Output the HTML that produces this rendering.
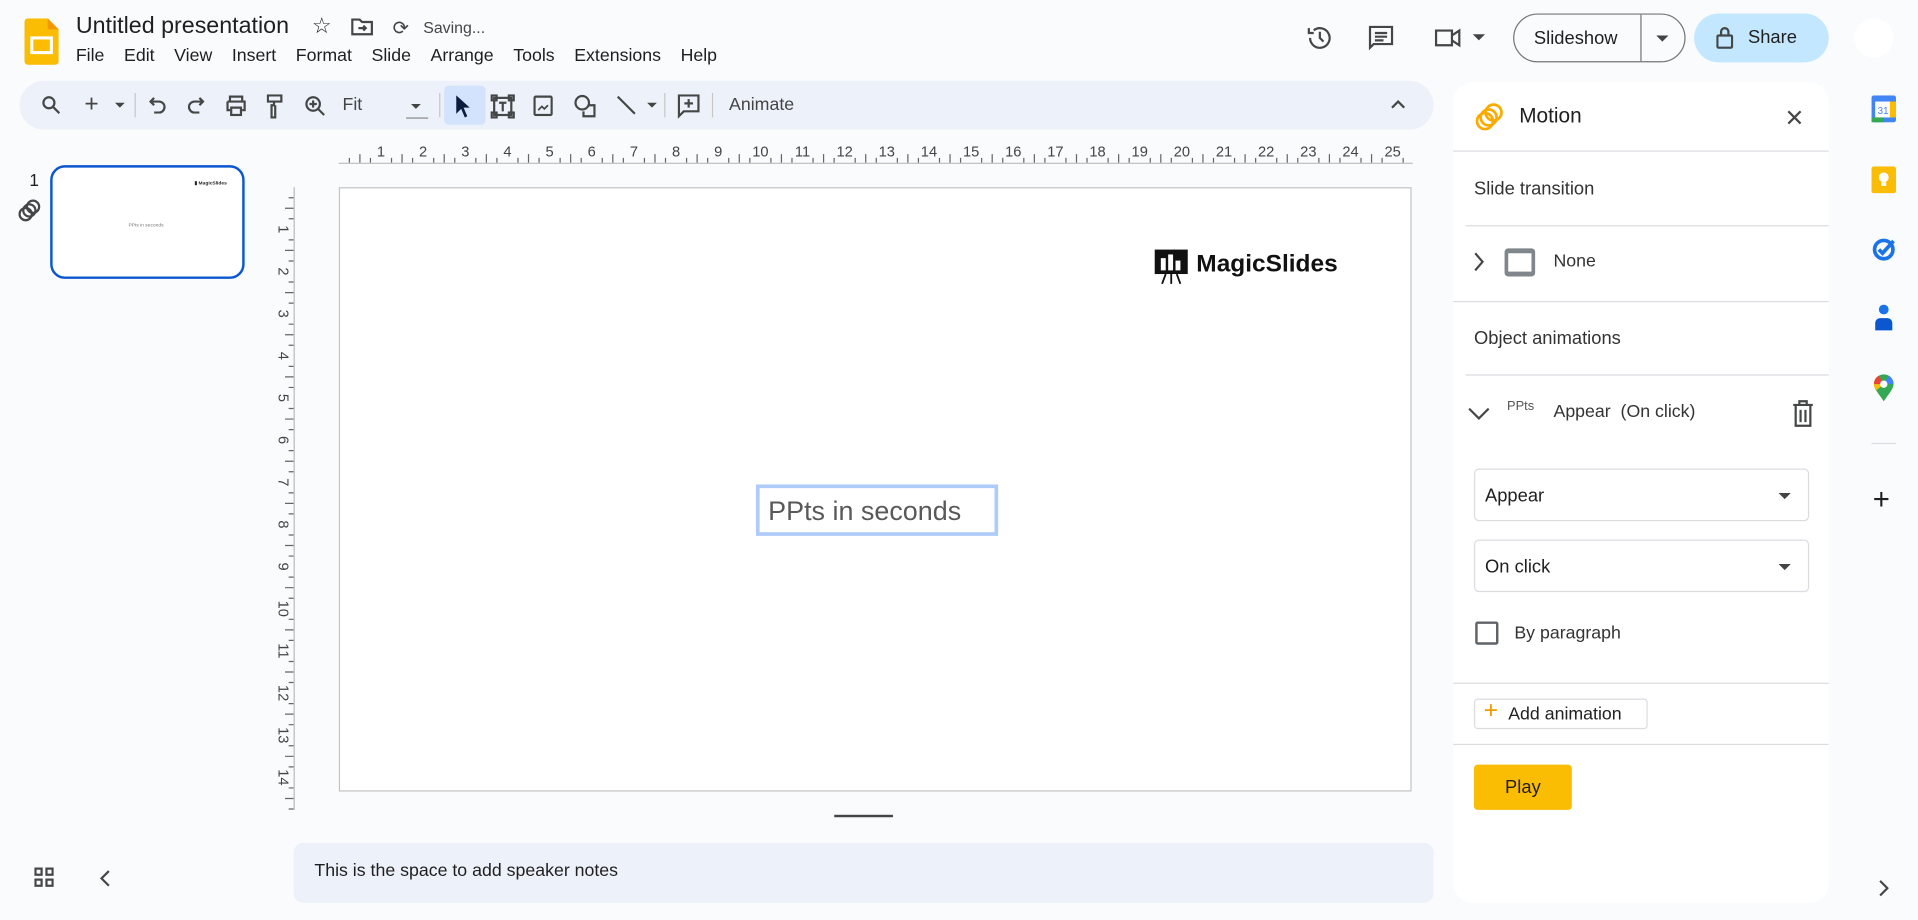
<!DOCTYPE html>
<html><head><meta charset="utf-8"><style>
*{margin:0;padding:0;box-sizing:border-box}
html,body{width:1918px;height:920px;overflow:hidden;background:#f9fbfd}
#w{position:absolute;left:0;top:0;width:1568px;height:752px;transform:scale(1.22322,1.2234);transform-origin:0 0;font-family:"Liberation Sans",Arial,sans-serif;color:#1f1f1f;background:#f9fbfd}
.a{position:absolute}
.menu span{margin-right:16px}
.ic{position:absolute;fill:none;stroke:#444746;stroke-width:1.8}
.tb{position:absolute;left:16px;top:66px;width:1156px;height:40px;background:#edf2fa;border-radius:20px}
.sep{position:absolute;top:10px;width:1px;height:20px;background:#c7c7c7}
.panel{position:absolute;left:1188px;top:67px;width:307px;height:671px;background:#fff;border-radius:16px}
.hl{position:absolute;height:1px;background:#dadce0}
.sel{position:absolute;left:17px;width:274px;height:43px;border:1px solid #dadce0;border-radius:4px;font-size:15px;padding:13px 8px}
.sel:after{content:"";position:absolute;right:14px;top:19px;border:5px solid transparent;border-top-color:#444;border-bottom:0}
</style></head><body><div id="w">
<svg class="a" style="left:20px;top:15px" width="28" height="38" viewBox="0 0 28 38"><path d="M3 0h16l9 9v26a3 3 0 0 1-3 3H3a3 3 0 0 1-3-3V3a3 3 0 0 1 3-3z" fill="#fbbc04"/><path d="M19 0l9 9h-9z" fill="#f29900"/><rect x="6" y="16" width="16" height="12" fill="none" stroke="#fff" stroke-width="2.5"/></svg>
<div class="a" style="left:62px;top:11px;font-size:19px;color:#1f1f1f">Untitled presentation</div>
<div class="a" style="left:255px;top:11px;font-size:18px">☆</div>
<svg class="ic" style="left:287px;top:14px" width="18" height="16" viewBox="0 0 18 16"><path d="M1 2h6l2 2h8v10H1z M6 9h6 M10 7l2 2-2 2"/></svg>
<div class="a" style="left:321px;top:13px;font-size:16px;color:#444">⟳</div>
<div class="a" style="left:346px;top:15px;font-size:13px;color:#444746">Saving...</div>
<div class="a menu" style="left:62px;top:38px;font-size:14.5px;color:#1f1f1f"><span>File</span><span>Edit</span><span>View</span><span>Insert</span><span>Format</span><span>Slide</span><span>Arrange</span><span>Tools</span><span>Extensions</span><span>Help</span></div>
<svg class="ic" style="left:1067px;top:19px" width="24" height="24" viewBox="0 0 24 24" stroke-width="2"><path d="M4 12a8 8 0 1 0 3-6.2M3 4v4h4M12 7v5l3 3"/></svg>
<svg class="ic" style="left:1117px;top:19px" width="24" height="24" viewBox="0 0 24 24" stroke-width="2"><path d="M3 3h18v14H6l-3 3z M7 8h10M7 11h10M7 14h7"/></svg>
<svg class="ic" style="left:1172px;top:21px" width="24" height="20" viewBox="0 0 24 20" stroke-width="2"><path d="M2 4h13v12H2z M15 8l6-4v12l-6-4"/></svg>
<div class="a" style="left:1204px;top:28px;border:5px solid transparent;border-top-color:#444;border-bottom:0"></div>
<div class="a" style="left:1237px;top:11px;width:141px;height:40px;border:1px solid #747775;border-radius:20px;font-size:15px;color:#1f1f1f"><span class="a" style="left:16px;top:11px">Slideshow</span><span class="a" style="left:103px;top:0;width:1px;height:38px;background:#747775"></span><span class="a" style="left:116px;top:17px;border:5px solid transparent;border-top-color:#444;border-bottom:0"></span></div>
<div class="a" style="left:1385px;top:11px;width:110px;height:40px;background:#c2e7ff;border-radius:20px;font-size:15px"><svg class="ic" style="left:18px;top:11px" width="14" height="18" viewBox="0 0 14 18" stroke="#1f1f1f" stroke-width="1.8"><rect x="1" y="7" width="12" height="10" rx="1"/><path d="M4 7V4a3 3 0 0 1 6 0v3"/></svg><span class="a" style="left:44px;top:11px">Share</span></div>
<div class="a" style="left:1516px;top:15px;width:32px;height:32px;border-radius:50%;background:#fff"></div>
<div class="tb">
<svg class="ic" style="left:18px;top:12px" width="16" height="16" viewBox="0 0 16 16" stroke-width="2"><circle cx="6" cy="6" r="4.5"/><path d="M9.5 9.5l5 5"/></svg>
<div class="a" style="left:53px;top:8px;font-size:20px;color:#444">+</div>
<div class="a" style="left:78px;top:18px;border:4px solid transparent;border-top-color:#444;border-bottom:0"></div>
<div class="sep" style="left:94px"></div>
<svg class="ic" style="left:106px;top:13px" width="14" height="14" viewBox="0 0 14 14" stroke-width="1.8"><path d="M4 1L1 4l3 3M1 4h7a4.5 4.5 0 0 1 0 9H4"/></svg>
<svg class="ic" style="left:137px;top:13px" width="14" height="14" viewBox="0 0 14 14" stroke-width="1.8"><path d="M10 1l3 3-3 3M13 4H6a4.5 4.5 0 0 0 0 9h4"/></svg>
<svg class="ic" style="left:168px;top:12px" width="18" height="17" viewBox="0 0 18 17" stroke-width="1.8"><path d="M4 5V1h10v4M2 5h14v7h-2M4 12H2V5M5 10h8v6H5z"/></svg>
<svg class="ic" style="left:202px;top:11px" width="14" height="20" viewBox="0 0 14 20" stroke="#b0b0b0"><path d="M1 1h11v5H1z M6 6v3h-2v10h3V9"/></svg>
<svg class="ic" style="left:233px;top:12px" width="17" height="17" viewBox="0 0 17 17" stroke-width="1.8"><circle cx="7" cy="7" r="5.5"/><path d="M11 11l5 5M7 4v6M4 7h6"/></svg>
<div class="a" style="left:264px;top:12px;font-size:14.5px;color:#444">Fit</div>
<div class="a" style="left:320px;top:19px;border:4px solid transparent;border-top-color:#444;border-bottom:0"></div>
<div class="a" style="left:316px;top:30px;width:18px;height:1px;background:#888"></div>
<div class="sep" style="left:343px"></div>
<div class="a" style="left:347px;top:4px;width:34px;height:32px;background:#d3e3fd;border-radius:4px"></div>
<svg class="a" style="left:356px;top:11px" width="14" height="20" viewBox="0 0 14 20"><path d="M1 1l11 10H7l3 7-2 1-3-7-4 4z" fill="#0b1c3d"/></svg>
<svg class="ic" style="left:385px;top:11px" width="20" height="20" viewBox="0 0 20 20" stroke-width="1.6"><rect x="3" y="3" width="14" height="14"/><rect x="1" y="1" width="4" height="4"/><rect x="15" y="1" width="4" height="4"/><rect x="1" y="15" width="4" height="4"/><rect x="15" y="15" width="4" height="4"/><path d="M7 7h6M10 7v7"/></svg>
<svg class="ic" style="left:420px;top:12px" width="16" height="17" viewBox="0 0 16 17" stroke-width="1.8"><rect x="1" y="1" width="14" height="15" rx="1"/><path d="M4 12l3-3 2 2 3-3" stroke-width="1.4"/></svg>
<svg class="ic" style="left:453px;top:11px" width="18" height="19" viewBox="0 0 18 19" stroke-width="1.8"><circle cx="7" cy="7" r="5.5"/><path d="M12 9h5v9H8v-4"/></svg>
<svg class="ic" style="left:487px;top:11px" width="18" height="18" viewBox="0 0 18 18" stroke-width="2.2"><path d="M2 2l14 14"/></svg>
<div class="a" style="left:513px;top:18px;border:4px solid transparent;border-top-color:#444;border-bottom:0"></div>
<div class="sep" style="left:527px"></div>
<svg class="ic" style="left:538px;top:11px" width="18" height="20" viewBox="0 0 18 20" stroke-width="1.8"><path d="M1 1h16v13H5l-4 4z M9 4v7M5.5 7.5h7"/></svg>
<div class="sep" style="left:566px"></div>
<div class="a" style="left:580px;top:12px;font-size:14.5px;color:#444">Animate</div>
<svg class="ic" style="left:1121px;top:15px" width="12" height="8" viewBox="0 0 12 8" stroke-width="1.8"><path d="M1 7l5-5 5 5"/></svg>
</div>
<div class="a" style="left:24px;top:139px;font-size:14px">1</div>
<svg class="ic" style="left:14px;top:162px" width="20" height="20" viewBox="0 0 20 20" stroke-width="1.6"><circle cx="7" cy="13" r="5"/><circle cx="10" cy="10" r="5"/><circle cx="13" cy="7" r="5"/></svg>
<div class="a" style="left:41px;top:135px;width:159px;height:93px;border:2.5px solid #0b57d0;border-radius:12px;background:#fff">
<div class="a" style="left:116px;top:10px;font-size:4px;font-weight:bold">▮ MagicSlides</div>
<div class="a" style="left:62px;top:44px;font-size:4px;color:#777">PPts in seconds</div></div>
<svg class="ic" style="left:28px;top:709px" width="16" height="16" viewBox="0 0 16 16" stroke-width="1.5"><rect x="1" y="1" width="5" height="5"/><rect x="10" y="1" width="5" height="5"/><rect x="1" y="10" width="5" height="5"/><rect x="10" y="10" width="5" height="5"/></svg>
<svg class="ic" style="left:81px;top:711px" width="10" height="14" viewBox="0 0 10 14" stroke-width="1.6"><path d="M8 1L2 7l6 6"/></svg>
<svg id="rh" class="a" style="left:240px;top:110px" width="920" height="26"></svg>
<svg id="rv" class="a" style="left:222px;top:134px" width="20" height="530"></svg>
<div class="a" style="left:277px;top:153px;width:877px;height:494px;background:#fff;border:1px solid #c4c4c4">
<svg class="a" style="left:665px;top:49px" width="29" height="30" viewBox="0 0 29 30"><rect x="1" y="1" width="27" height="20" fill="#111"/><rect x="6" y="8" width="4" height="10" fill="#fff"/><rect x="12" y="5" width="4" height="13" fill="#fff"/><rect x="18" y="10" width="4" height="8" fill="#fff"/><path d="M10 21l-3 8M19 21l3 8M14.5 21v8" stroke="#111" stroke-width="1.5"/></svg>
<div class="a" style="left:700px;top:51px;font-size:20px;font-weight:bold;color:#111">MagicSlides</div>
<div class="a" style="left:340px;top:242px;width:198px;height:42px;border:3px solid #aecbfa;font-size:22px;color:#595959;padding:6px 7px">PPts in seconds</div>
</div>
<div class="a" style="left:682px;top:666px;width:48px;height:2px;background:#444"></div>
<div class="a" style="left:240px;top:689px;width:932px;height:49px;background:#edf2fa;border-radius:8px;font-size:14.5px;padding:15px 17px">This is the space to add speaker notes</div>
<div class="panel">
<svg class="a" style="left:17px;top:15px" width="26" height="26" viewBox="0 0 26 26" fill="none" stroke="#f9ab00" stroke-width="2.2"><circle cx="9" cy="17" r="6.5"/><circle cx="12" cy="14" r="6.5"/><circle cx="16" cy="10" r="6.5"/></svg>
<div class="a" style="left:54px;top:18px;font-size:17px">Motion</div>
<svg class="ic" style="left:273px;top:23px" width="12" height="12" viewBox="0 0 12 12" stroke="#1f1f1f" stroke-width="1.8"><path d="M1 1l10 10M11 1L1 11"/></svg>
<div class="hl" style="left:0;top:56px;width:307px"></div>
<div class="a" style="left:17px;top:79px;font-size:15px;color:#333">Slide transition</div>
<div class="hl" style="left:10px;top:117px;width:297px"></div>
<svg class="ic" style="left:16px;top:139px" width="10" height="16" viewBox="0 0 10 16" stroke-width="2"><path d="M2 1l6 7-6 7"/></svg>
<div class="a" style="left:42px;top:136px;width:25px;height:23px;background:#80868b;border-radius:3px"><div class="a" style="left:3px;top:4px;width:19px;height:15px;background:#fff"></div></div>
<div class="a" style="left:82px;top:139px;font-size:14.5px;color:#333">None</div>
<div class="hl" style="left:0;top:179px;width:307px"></div>
<div class="a" style="left:17px;top:201px;font-size:15px;color:#333">Object animations</div>
<div class="hl" style="left:10px;top:239px;width:297px"></div>
<svg class="ic" style="left:12px;top:265px" width="18" height="12" viewBox="0 0 18 12" stroke-width="2"><path d="M1 2l8 8 8-8"/></svg>
<div class="a" style="left:44px;top:259px;font-size:10.5px;color:#555">PPts</div>
<div class="a" style="left:82px;top:262px;font-size:14.5px;color:#333">Appear&nbsp; (On click)</div>
<svg class="ic" style="left:277px;top:260px" width="18" height="22" viewBox="0 0 18 22" stroke="#80868b" stroke-width="2"><path d="M1 4h16M6 4V1h6v3M3 4v17h12V4M7 8v10M11 8v10"/></svg>
<div class="sel" style="top:316px">Appear</div>
<div class="sel" style="top:374px">On click</div>
<div class="a" style="left:18px;top:441px;width:19px;height:19px;border:2px solid #5f6368;border-radius:2px"></div>
<div class="a" style="left:50px;top:443px;font-size:14.5px;color:#333">By paragraph</div>
<div class="hl" style="left:0;top:491px;width:307px"></div>
<div class="a" style="left:17px;top:504px;width:142px;height:25px;border:1px solid #dadce0;border-radius:3px;font-size:14.5px;padding:4px 0 0 27px;color:#222">Add animation<span class="a" style="left:7px;top:-2px;font-size:20px;color:#f29900">+</span></div>
<div class="hl" style="left:0;top:541px;width:307px"></div>
<div class="a" style="left:17px;top:558px;width:80px;height:37px;background:#fbbc04;border-radius:3px;font-size:15px;text-align:center;padding-top:10px">Play</div>
</div>
<svg class="a" style="left:1530px;top:78px" width="20" height="22" viewBox="0 0 20 22"><rect x="0" y="0" width="20" height="22" rx="2" fill="#4285f4"/><rect x="3" y="5" width="14" height="13" fill="#fff"/><rect x="0" y="18" width="10" height="4" fill="#34a853"/><rect x="15" y="5" width="5" height="13" fill="#fbbc04"/><text x="5" y="15" font-size="8" fill="#4285f4" font-family="Liberation Sans">31</text></svg>
<svg class="a" style="left:1530px;top:136px" width="20" height="22" viewBox="0 0 20 22"><rect width="20" height="22" rx="2" fill="#fbbc04"/><circle cx="10" cy="9" r="4" fill="#fff"/><rect x="8" y="13" width="4" height="3" fill="#fff"/></svg>
<svg class="a" style="left:1530px;top:192px" width="22" height="22" viewBox="0 0 22 22" fill="none" stroke="#1a73e8" stroke-width="3"><circle cx="10" cy="12" r="7.5"/><path d="M6 12l3 3 9-10"/></svg>
<svg class="a" style="left:1532px;top:249px" width="16" height="22" viewBox="0 0 16 22"><circle cx="8" cy="4" r="4" fill="#1a73e8"/><path d="M1 21v-6a4 4 0 0 1 4-4h6a4 4 0 0 1 4 4v6z" fill="#0b57d0"/></svg>
<svg class="a" style="left:1532px;top:306px" width="16" height="22" viewBox="0 0 16 22"><path d="M8 22C4 16 0 12 0 8a8 8 0 0 1 16 0c0 4-4 8-8 14z" fill="#34a853"/><path d="M0 8a8 8 0 0 1 4-7l4 7z" fill="#ea4335"/><path d="M16 8a8 8 0 0 0-4-7L8 8z" fill="#4285f4"/><path d="M0 8c0 2 1 4 2 5l6-5z" fill="#fbbc04"/><circle cx="8" cy="8" r="3" fill="#fff"/></svg>
<div class="a" style="left:1530px;top:362px;width:20px;height:1px;background:#dadce0"></div>
<div class="a" style="left:1531px;top:395px;font-size:24px;color:#1f1f1f">+</div>
<svg class="ic" style="left:1536px;top:719px" width="8" height="14" viewBox="0 0 8 14" stroke-width="1.6"><path d="M1 1l6 6-6 6"/></svg>
</div>
<script>
var u=34.46,h='',v='';
for(var i=-1;i<=26*4;i++){var x=37+i*u/4;if(x<38||x>912)continue;var L=i%4==0?0:(i%2==0?7:4);if(L)h+='<line x1="'+x+'" y1="23" x2="'+x+'" y2="'+(23-L)+'" stroke="#666" stroke-width="1"/>';if(i%4==0&&i>0)h+='<text x="'+x+'" y="18" font-size="12" fill="#444" text-anchor="middle" font-family="Liberation Sans">'+(i/4)+'</text>';}
h+='<line x1="37" y1="23.5" x2="915" y2="23.5" stroke="#bbb"/>';
document.getElementById('rh').innerHTML=h;
for(var i=0;i<=15*4;i++){var y=19+i*u/4;if(y>528)continue;var L=i%4==0?0:(i%2==0?7:4);if(L)v+='<line x1="18" y1="'+y+'" x2="'+(18-L)+'" y2="'+y+'" stroke="#666"/>';if(i%4==0&&i>0)v+='<text transform="translate(9,'+y+') rotate(90)" font-size="12" fill="#444" text-anchor="middle" dominant-baseline="central" font-family="Liberation Sans">'+(i/4)+'</text>';}
v+='<line x1="18.5" y1="19" x2="18.5" y2="528" stroke="#bbb"/>';
document.getElementById('rv').innerHTML=v;
</script>
</body></html>
